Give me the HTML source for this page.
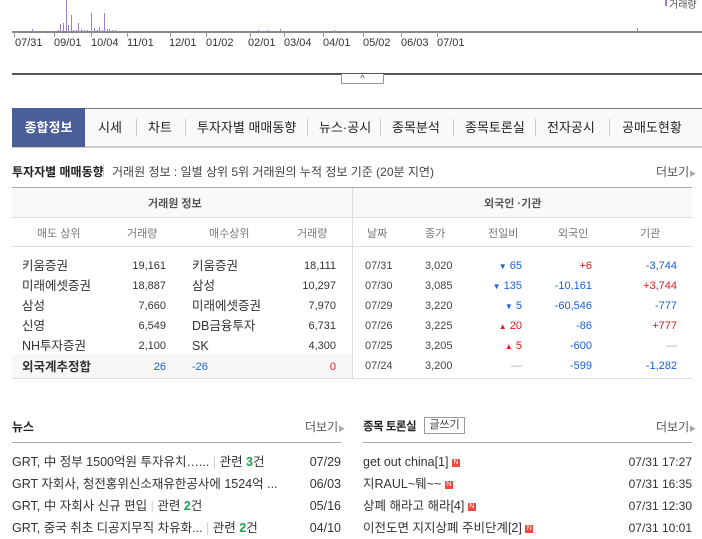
<!DOCTYPE html>
<html><head><meta charset="utf-8"><style>
*{margin:0;padding:0;box-sizing:border-box}
body{width:702px;height:525px;overflow:hidden;background:#fff;font-family:"Liberation Sans","Noto Sans CJK KR",sans-serif;font-size:12px;color:#333;position:relative}
.a{position:absolute;white-space:nowrap}
.bar{position:absolute;width:1px;background:#9a82c8}
.lb{position:absolute;top:37px;font-size:11px;color:#333}
.tick{position:absolute;top:32px;width:1px;height:5px;background:#999}
.tab{position:absolute;top:108px;height:39px;line-height:39px;font-size:13px;color:#222}
.sep{position:absolute;top:119px;width:1px;height:17px;background:#ccc}
.hd{color:#777;font-size:11px}
.blue{color:#1a5fd6}.red{color:#e0181b}
.n{display:inline-block;width:8px;height:8px;background:#e94a3f;color:#fff;font-size:7px;line-height:8px;text-align:center;vertical-align:middle}
</style></head><body>
<div class="a" style="left:12px;top:31px;width:690px;height:2px;background:#888"></div>
<div class="bar" style="left:32px;top:29px;height:3px"></div>
<div class="bar" style="left:35px;top:31px;height:1px"></div>
<div class="bar" style="left:40px;top:31px;height:1px"></div>
<div class="bar" style="left:45px;top:31px;height:1px"></div>
<div class="bar" style="left:50px;top:31px;height:1px"></div>
<div class="bar" style="left:58px;top:30px;height:2px"></div>
<div class="bar" style="left:60px;top:24px;height:8px"></div>
<div class="bar" style="left:63px;top:23px;height:9px"></div>
<div class="bar" style="left:66px;top:0;height:32px"></div>
<div class="bar" style="left:68px;top:25px;height:7px"></div>
<div class="bar" style="left:71px;top:15px;height:17px"></div>
<div class="bar" style="left:73px;top:30px;height:2px"></div>
<div class="bar" style="left:76px;top:30px;height:2px"></div>
<div class="bar" style="left:78px;top:23px;height:9px"></div>
<div class="bar" style="left:81px;top:29px;height:3px"></div>
<div class="bar" style="left:84px;top:30px;height:2px"></div>
<div class="bar" style="left:87px;top:30px;height:2px"></div>
<div class="bar" style="left:91px;top:13px;height:19px"></div>
<div class="bar" style="left:94px;top:28px;height:4px"></div>
<div class="bar" style="left:97px;top:30px;height:2px"></div>
<div class="bar" style="left:99px;top:27px;height:5px"></div>
<div class="bar" style="left:102px;top:30px;height:2px"></div>
<div class="bar" style="left:104px;top:13px;height:19px"></div>
<div class="bar" style="left:107px;top:29px;height:3px"></div>
<div class="bar" style="left:109px;top:29px;height:3px"></div>
<div class="bar" style="left:112px;top:30px;height:2px"></div>
<div class="bar" style="left:115px;top:30px;height:2px"></div>
<div class="bar" style="left:258px;top:30px;height:2px"></div>
<div class="bar" style="left:268px;top:30px;height:2px"></div>
<div class="bar" style="left:280px;top:29px;height:3px"></div>
<div class="bar" style="left:334px;top:30px;height:2px"></div>
<div class="bar" style="left:637px;top:28px;height:4px"></div>
<div class="a" style="left:665px;top:0;width:2px;height:6px;background:#9a82c8"></div>
<div class="a" style="left:669px;top:-4px;font-size:10px;color:#555">거래량</div>
<div class="tick" style="left:14px"></div><div class="tick" style="left:54px"></div><div class="tick" style="left:91px"></div><div class="tick" style="left:127px"></div><div class="tick" style="left:170px"></div><div class="tick" style="left:206px"></div><div class="tick" style="left:250px"></div><div class="tick" style="left:284px"></div><div class="tick" style="left:323px"></div><div class="tick" style="left:363px"></div><div class="tick" style="left:401px"></div><div class="tick" style="left:437px"></div>
<div class="lb" style="left:15px">07/31</div><div class="lb" style="left:54px">09/01</div><div class="lb" style="left:91px">10/04</div><div class="lb" style="left:127px">11/01</div><div class="lb" style="left:169px">12/01</div><div class="lb" style="left:206px">01/02</div><div class="lb" style="left:248px">02/01</div><div class="lb" style="left:284px">03/04</div><div class="lb" style="left:323px">04/01</div><div class="lb" style="left:363px">05/02</div><div class="lb" style="left:401px">06/03</div><div class="lb" style="left:437px">07/01</div>
<div class="a" style="left:12px;top:73px;width:690px;height:2px;background:#555"></div>
<div class="a" style="left:341px;top:74px;width:43px;height:10px;border:1px solid #999;border-top:none;background:#fff;font-size:9px;line-height:8px;text-align:center;color:#333">^</div>
<div class="a" style="left:12px;top:108px;width:690px;height:40px;border-top:1px solid #777;border-bottom:2px solid #ccc;background:#f9f9f9"></div>
<div class="a" style="left:12px;top:108px;width:73px;height:39px;background:#4a5f97;color:#fff;font-weight:bold;font-size:13px;line-height:39px;text-align:center">종합정보</div>
<div class="tab" style="left:98px">시세</div><div class="sep" style="left:136px"></div>
<div class="tab" style="left:148px">차트</div><div class="sep" style="left:185px"></div>
<div class="tab" style="left:197px">투자자별 매매동향</div><div class="sep" style="left:307px"></div>
<div class="tab" style="left:319px">뉴스·공시</div><div class="sep" style="left:380px"></div>
<div class="tab" style="left:392px">종목분석</div><div class="sep" style="left:453px"></div>
<div class="tab" style="left:465px">종목토론실</div><div class="sep" style="left:535px"></div>
<div class="tab" style="left:547px">전자공시</div><div class="sep" style="left:609px"></div>
<div class="tab" style="left:622px">공매도현황</div>
<div class="a" style="left:12px;top:163px;font-weight:bold;font-size:12px;color:#222">투자자별 매매동향</div>
<div class="a" style="left:103px;top:165px;width:1px;height:12px;background:#ccc"></div>
<div class="a" style="left:112px;top:163px;font-size:12px;color:#444">거래원 정보 : 일별 상위 5위 거래원의 누적 정보 기준 (20분 지연)</div>
<div class="a" style="left:656px;top:163px;font-size:12px;color:#555">더보기<span style="font-size:7px;color:#aaa">▶</span></div>
<div class="a" style="left:12px;top:187px;width:680px;height:1px;background:#aaa"></div>
<div class="a" style="left:12px;top:188px;width:680px;height:29px;background:#f9f9f9"></div>
<div class="a" style="left:12px;top:217px;width:680px;height:1px;background:#ddd"></div>
<div class="a" style="left:12px;top:246px;width:680px;height:1px;background:#ddd"></div>
<div class="a" style="left:352px;top:188px;width:1px;height:191px;background:#ddd"></div>
<div class="a" style="left:12px;top:354px;width:340px;height:24px;background:#f7f7f7"></div>
<div class="a" style="left:12px;top:378px;width:680px;height:1px;background:#ddd"></div>
<div class="a hd" style="left:148px;top:195px;font-weight:bold;color:#555">거래원 정보</div>
<div class="a hd" style="left:484px;top:195px;font-weight:bold;color:#555">외국인 ·기관</div>
<div class="a hd" style="left:37px;top:225px">매도 상위</div>
<div class="a hd" style="left:127px;top:225px">거래량</div>
<div class="a hd" style="left:209px;top:225px">매수상위</div>
<div class="a hd" style="left:297px;top:225px">거래량</div>
<div class="a hd" style="left:367px;top:225px">날짜</div>
<div class="a hd" style="left:425px;top:225px">종가</div>
<div class="a hd" style="left:488px;top:225px">전일비</div>
<div class="a hd" style="left:558px;top:225px">외국인</div>
<div class="a hd" style="left:640px;top:225px">기관</div>
<div class="a" style="left:22px;top:256px;width:320px;font-size:12.5px;line-height:20px">
<div style="position:relative;height:20px">키움증권<span style="position:absolute;right:176px;font-size:11px">19,161</span><span style="position:absolute;left:170px">키움증권</span><span style="position:absolute;right:6px;font-size:11px">18,111</span></div>
<div style="position:relative;height:20px">미래에셋증권<span style="position:absolute;right:176px;font-size:11px">18,887</span><span style="position:absolute;left:170px">삼성</span><span style="position:absolute;right:6px;font-size:11px">10,297</span></div>
<div style="position:relative;height:20px">삼성<span style="position:absolute;right:176px;font-size:11px">7,660</span><span style="position:absolute;left:170px">미래에셋증권</span><span style="position:absolute;right:6px;font-size:11px">7,970</span></div>
<div style="position:relative;height:20px">신영<span style="position:absolute;right:176px;font-size:11px">6,549</span><span style="position:absolute;left:170px">DB금융투자</span><span style="position:absolute;right:6px;font-size:11px">6,731</span></div>
<div style="position:relative;height:20px">NH투자증권<span style="position:absolute;right:176px;font-size:11px">2,100</span><span style="position:absolute;left:170px">SK</span><span style="position:absolute;right:6px;font-size:11px">4,300</span></div>
<div style="position:relative;height:20px;margin-top:1px;font-weight:bold">외국계추정합<span class="blue" style="position:absolute;right:176px;font-size:11px;font-weight:normal">26</span><span class="blue" style="position:absolute;left:170px;font-size:11px;font-weight:normal">-26</span><span class="red" style="position:absolute;right:6px;font-size:11px;font-weight:normal">0</span></div>
</div>
<div class="a" style="left:365px;top:256px;width:320px;font-size:11px;line-height:20px;color:#444">
<div style="position:relative;height:20px">07/31<span style="position:absolute;left:60px">3,020</span><span class="blue" style="position:absolute;right:163px"><span style="font-size:8px">▼</span> 65</span><span class="red" style="position:absolute;right:93px">+6</span><span class="blue" style="position:absolute;right:8px">-3,744</span></div>
<div style="position:relative;height:20px">07/30<span style="position:absolute;left:60px">3,085</span><span class="blue" style="position:absolute;right:163px"><span style="font-size:8px">▼</span> 135</span><span class="blue" style="position:absolute;right:93px">-10,161</span><span class="red" style="position:absolute;right:8px">+3,744</span></div>
<div style="position:relative;height:20px">07/29<span style="position:absolute;left:60px">3,220</span><span class="blue" style="position:absolute;right:163px"><span style="font-size:8px">▼</span> 5</span><span class="blue" style="position:absolute;right:93px">-60,546</span><span class="blue" style="position:absolute;right:8px">-777</span></div>
<div style="position:relative;height:20px">07/26<span style="position:absolute;left:60px">3,225</span><span class="red" style="position:absolute;right:163px"><span style="font-size:8px">▲</span> 20</span><span class="blue" style="position:absolute;right:93px">-86</span><span class="red" style="position:absolute;right:8px">+777</span></div>
<div style="position:relative;height:20px">07/25<span style="position:absolute;left:60px">3,205</span><span class="red" style="position:absolute;right:163px"><span style="font-size:8px">▲</span> 5</span><span class="blue" style="position:absolute;right:93px">-600</span><span style="position:absolute;right:8px;color:#aaa">—</span></div>
<div style="position:relative;height:20px">07/24<span style="position:absolute;left:60px">3,200</span><span style="position:absolute;right:163px;color:#aaa">—</span><span class="blue" style="position:absolute;right:93px">-599</span><span class="blue" style="position:absolute;right:8px">-1,282</span></div>
</div>
<div class="a" style="left:12px;top:418px;font-weight:bold;color:#222">뉴스</div>
<div class="a" style="left:305px;top:418px;color:#555">더보기<span style="font-size:7px;color:#aaa">▶</span></div>
<div class="a" style="left:12px;top:442px;width:329px;height:1px;background:#aaa"></div>
<div class="a" style="left:12px;top:451px;width:329px;font-size:12.5px;line-height:22px;color:#333">
<div style="position:relative">GRT, 中 정부 1500억원 투자유치…... <span style="color:#ccc">|</span> 관련 <b style="color:#1aa34a">3</b>건<span style="position:absolute;right:0">07/29</span></div>
<div style="position:relative">GRT 자회사, 청전홍위신소재유한공사에 1524억 ...<span style="position:absolute;right:0">06/03</span></div>
<div style="position:relative">GRT, 中 자회사 신규 편입 <span style="color:#ccc">|</span> 관련 <b style="color:#1aa34a">2</b>건<span style="position:absolute;right:0">05/16</span></div>
<div style="position:relative">GRT, 중국 취초 디공지무직 차유화... <span style="color:#ccc">|</span> 관련 <b style="color:#1aa34a">2</b>건<span style="position:absolute;right:0">04/10</span></div>
</div>
<div class="a" style="left:363px;top:418px;font-weight:bold;color:#222;font-size:11.5px;letter-spacing:-0.5px">종목 토론실</div>
<div class="a" style="left:424px;top:417px;width:41px;height:17px;border:1px solid #999;font-size:11px;line-height:15px;text-align:center;color:#444">글쓰기</div>
<div class="a" style="left:656px;top:418px;color:#555">더보기<span style="font-size:7px;color:#aaa">▶</span></div>
<div class="a" style="left:363px;top:442px;width:329px;height:1px;background:#aaa"></div>
<div class="a" style="left:363px;top:451px;width:329px;font-size:12.5px;line-height:22px;color:#333">
<div style="position:relative">get out china[1] <span class="n">N</span><span style="position:absolute;right:0;font-size:12px">07/31 17:27</span></div>
<div style="position:relative">지RAUL~퉤~~ <span class="n">N</span><span style="position:absolute;right:0;font-size:12px">07/31 16:35</span></div>
<div style="position:relative">상폐 해라고 해라[4] <span class="n">N</span><span style="position:absolute;right:0;font-size:12px">07/31 12:30</span></div>
<div style="position:relative">이전도면 지지상폐 주비단계[2] <span class="n">N</span><span style="position:absolute;right:0;font-size:12px">07/31 10:01</span></div>
</div>
</body></html>
